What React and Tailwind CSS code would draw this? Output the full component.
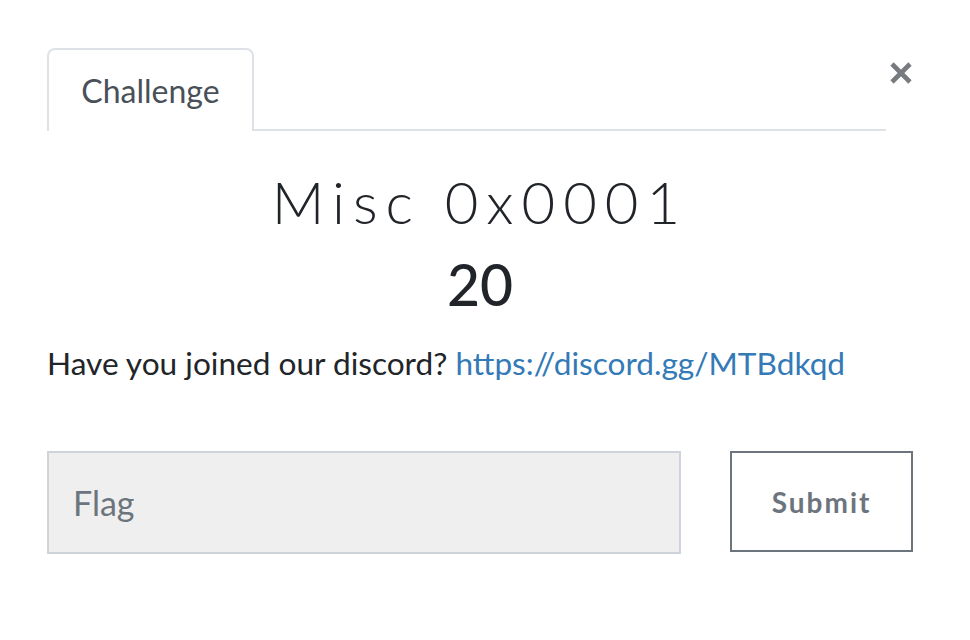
import React from 'react';

const CloseIcon = () => (
  <svg width="24" height="24" viewBox="0 0 24 24" className="block">
    <path d="M3 3 L21 21 M21 3 L3 21" stroke="#777b80" strokeWidth="4.6" strokeLinecap="butt" />
  </svg>
);

const App = () => {
  return (
    <div className="w-[970px] h-[640px] bg-white font-['Lato',sans-serif] text-[#212529]">
      <div className="pl-[47px] pr-[57px] pt-[48px]">
        <div className="flex items-start">
          <div className="flex-1 flex border-b-2 border-[#dee2e6]">
            <div className="w-[207px] h-[83px] -mb-[2px] flex items-center justify-center bg-white border-2 border-b-0 border-[#dee2e6] rounded-t-[8px] text-[32px] text-[#495057]">
              Challenge
            </div>
          </div>
          <button className="w-[27px] flex justify-end pt-[13px]">
            <CloseIcon />
          </button>
        </div>

        <h3 className="mt-[36px] text-center text-[58px] leading-[70px] font-light tracking-[8px] text-[#212529]">
          Misc 0x0001
        </h3>
        <div className="mt-[14px] text-center text-[57px] leading-[66px] font-medium">20</div>

        <p className="mt-[24px] text-[31.6px] leading-[44px]">
          Have you joined our discord?{' '}
          <a href="#" className="text-[#337ab7]">https://discord.gg/MTBdkqd</a>
        </p>

        <div className="mt-[66px] flex items-start">
          <input
            placeholder="Flag"
            className="w-[635px] h-[103px] px-[24px] bg-[#efefef] border-2 border-[#cfd4da] text-[34px] placeholder:text-[#6c757d] outline-none"
          />
          <button className="ml-[49px] w-[183px] h-[101px] border-2 border-[#6c757d] text-[28px] font-bold tracking-[2px] text-[#6c757d]">
            Submit
          </button>
        </div>
      </div>
    </div>
  );
};

export default App;
